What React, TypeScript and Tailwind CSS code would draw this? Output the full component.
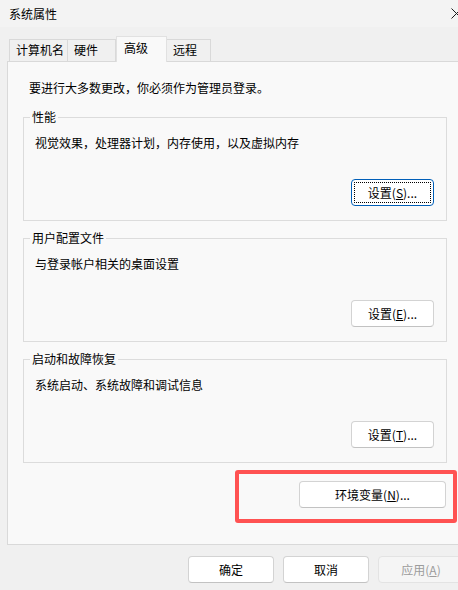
import React from "react";

const font = { fontFamily: '"Noto Sans CJK SC", "Noto Sans", sans-serif' };

function Btn({
  children,
  w,
  focused,
  disabled,
}: {
  children: React.ReactNode;
  w: string;
  focused?: boolean;
  disabled?: boolean;
}) {
  const base =
    "relative h-[27px] shrink-0 rounded-[4px] flex items-center justify-center text-[12px] leading-[16px] " + w;
  if (focused) {
    return (
      <div className={base + " bg-white border border-[#005fb8] text-black"}>
        <span className="absolute inset-[2px] border border-dotted border-black rounded-[1px]" />
        <span className="relative">{children}</span>
      </div>
    );
  }
  if (disabled) {
    return (
      <div className={base + " bg-[#f5f5f5] border border-[#e3e3e3] text-[#9c9c9c]"}>{children}</div>
    );
  }
  return (
    <div className={base + " bg-white border border-[#d3d3d3] border-b-[#c2c2c2] text-black"}>{children}</div>
  );
}

function Group({
  title,
  desc,
  btn,
}: {
  title: string;
  desc: string;
  btn: React.ReactNode;
}) {
  return (
    <fieldset className="ml-[15px] w-[424px] border border-[#dcdcdc] rounded-none">
      <legend className="ml-[6px] px-[2px] text-[12px] leading-[16px] text-black">{title}</legend>
      <div className="pt-[10px] pl-[11px] text-[12px] leading-[16px] text-black">{desc}</div>
      <div className="flex justify-end pr-[12px] pt-[28px] pb-[14px]">{btn}</div>
    </fieldset>
  );
}

export default function App() {
  return (
    <div className="w-[458px] h-[590px] overflow-hidden bg-[#f0f0f0] text-black" style={font}>
      {/* title bar */}
      <div className="h-[27px] bg-[#f3f3f3] flex items-center pl-[9px]">
        <span className="text-[12px] leading-[16px]">系统属性</span>
        <svg className="ml-auto mr-[-4px]" width="11" height="11" viewBox="0 0 11 11">
          <path d="M0.5 0.5 L10.5 10.5 M10.5 0.5 L0.5 10.5" stroke="#1a1a1a" strokeWidth="1" fill="none" />
        </svg>
      </div>

      {/* tabs */}
      <div className="mt-[9px] h-[25px] flex items-end pl-[9px] text-[12px] leading-[16px]">
        <div className="w-[59px] h-[22px] border border-b-0 border-[#d9d9d9] bg-[#f0f0f0] pl-[6px] pt-[2px]">计算机名</div>
        <div className="w-[48px] h-[22px] border border-l-0 border-b-0 border-[#d9d9d9] bg-[#f0f0f0] pl-[6px] pt-[2px]">硬件</div>
        <div className="relative z-10 w-[51px] h-[26px] -mb-px border border-b-0 border-[#e1e1e1] bg-[#f9f9f9] pl-[7px] pt-[3px]">
          高级
        </div>
        <div className="w-[44px] h-[22px] border border-l-0 border-b-0 border-[#d9d9d9] bg-[#f0f0f0] pl-[6px] pt-[2px]">远程</div>
      </div>

      {/* panel */}
      <div className="ml-[7px] w-[470px] h-[484px] border border-[#d9d9d9] bg-[#f9f9f9] flex flex-col">
        <div className="pt-[18px] pl-[21px] text-[12px] leading-[16px]">要进行大多数更改，你必须作为管理员登录。</div>
        <div className="mt-[13px] flex flex-col gap-[9px]">
          <Group
            title="性能"
            desc="视觉效果，处理器计划，内存使用，以及虚拟内存"
            btn={
              <Btn w="w-[83px]" focused>
                设置(<span className="underline">S</span>)...
              </Btn>
            }
          />
          <Group
            title="用户配置文件"
            desc="与登录帐户相关的桌面设置"
            btn={
              <Btn w="w-[83px]">
                设置(<span className="underline">E</span>)...
              </Btn>
            }
          />
          <Group
            title="启动和故障恢复"
            desc="系统启动、系统故障和调试信息"
            btn={
              <Btn w="w-[83px]">
                设置(<span className="underline">T</span>)...
              </Btn>
            }
          />
        </div>
        <div className="mt-[7px] ml-[227px] w-[222px] h-[53px] border-4 border-[#ff5252] rounded-[3px] flex justify-end items-start pt-[7px] pr-[7px]">
          <Btn w="w-[147px]">
            环境变量(<span className="underline">N</span>)...
          </Btn>
        </div>
      </div>

      {/* bottom buttons */}
      <div className="mt-[11px] flex gap-[9px] pl-[188px]">
        <Btn w="w-[86px]">确定</Btn>
        <Btn w="w-[86px]">取消</Btn>
        <Btn w="w-[86px]" disabled>
          应用(<span className="underline">A</span>)
        </Btn>
      </div>
    </div>
  );
}
